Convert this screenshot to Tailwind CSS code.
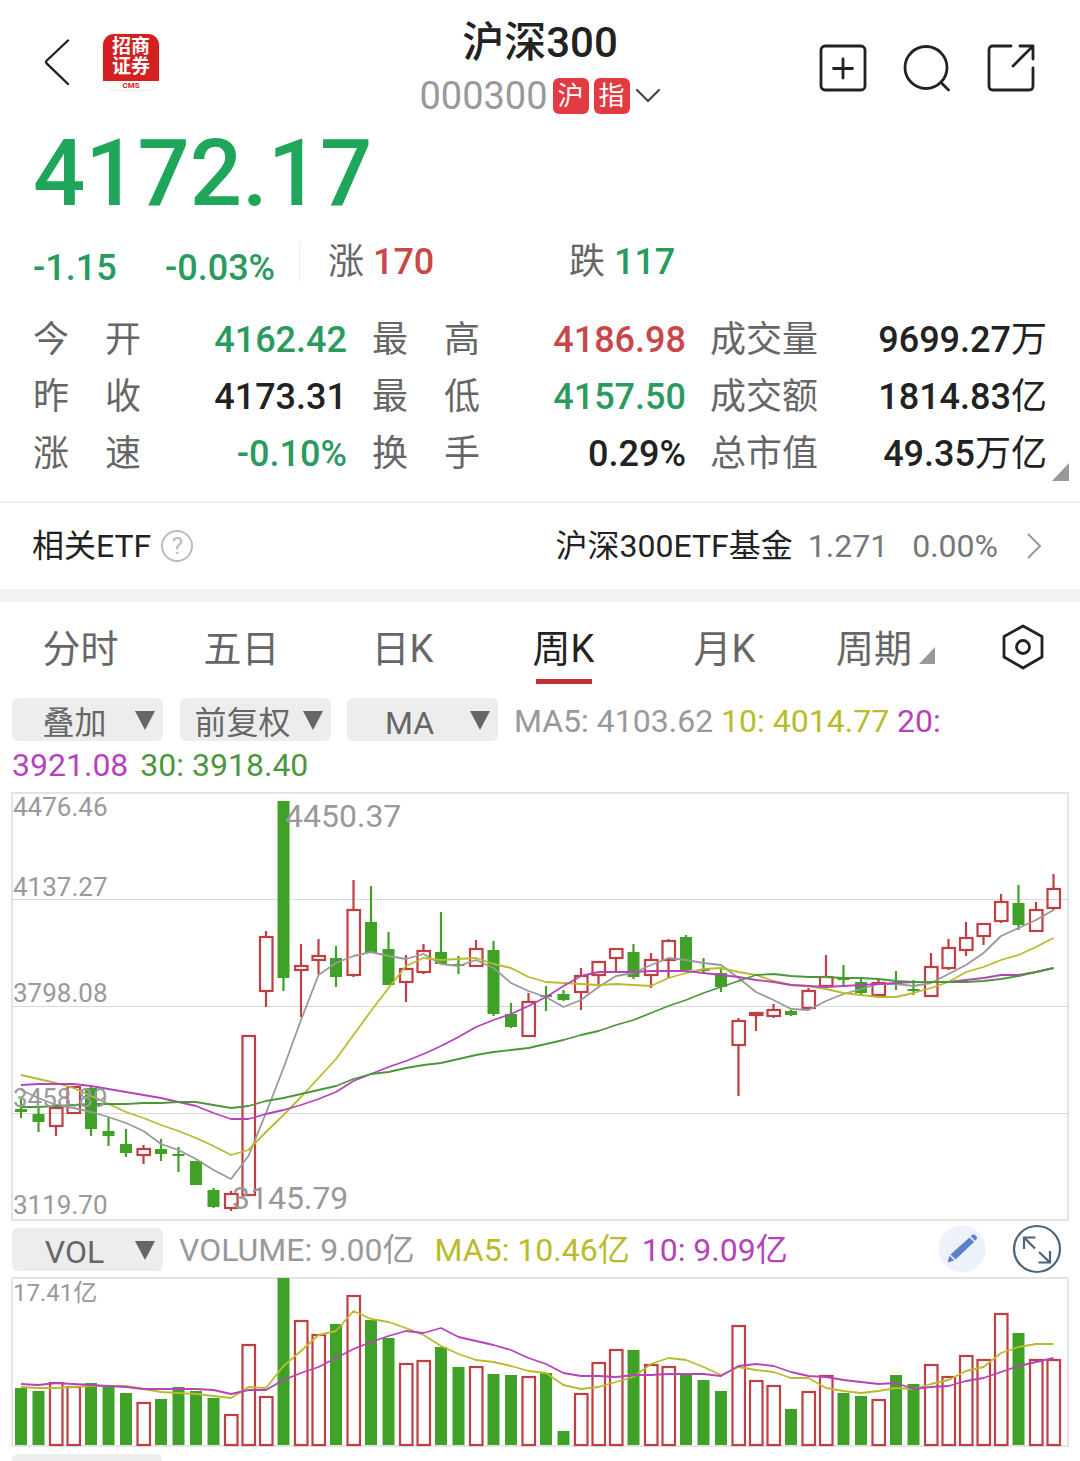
<!DOCTYPE html>
<html lang="zh-CN">
<head>
    <meta charset="UTF-8">
    <meta name="viewport" content="width=device-width, initial-scale=1.0">
    <title>沪深300</title>
    <script src="https://cdn.jsdelivr.net/npm/@tailwindcss/browser@4"></script>
</head>
<body class="bg-white text-[#222] font-['Roboto','Noto_Sans_CJK_SC',sans-serif]">
    <!-- Header -->
    <header class="grid grid-cols-[1fr_auto_1fr] items-start px-11 pt-4">
        <div class="flex items-center gap-8 pt-[17px]">
            <a href="#" aria-label="返回">
                <svg class="w-[26px] h-[46px]" viewBox="0 0 26 46" fill="none" stroke="#222" stroke-width="2.4" stroke-linecap="round" stroke-linejoin="round"><path d="M24 1.5 2.8 21.5Q1.2 23 2.8 24.6L24 45"/></svg>
            </a>
            <div class="w-[58px] h-[58px] rounded-xl overflow-hidden border border-[#eee] bg-white flex flex-col">
                <div class="h-[47px] bg-[#d4201f] text-white text-[19px] leading-[20px] font-bold text-center pt-[3px]">招商<br>证券</div>
                <div class="text-[#d4201f] text-[8px] leading-[9px] font-bold text-center">CMS</div>
            </div>
        </div>
        <div class="text-center">
            <h1 class="text-[42px] leading-[54px] font-medium">沪深300</h1>
            <button class="flex mx-auto items-center justify-center gap-[5px] h-[52px]">
                <span class="text-[38px] text-[#999]">000300</span>
                <span class="size-9 rounded-md bg-[#e23b41] text-white text-[26px] leading-9">沪</span>
                <span class="size-9 rounded-md bg-[#e23b41] text-white text-[26px] leading-9">指</span>
                <svg class="w-[26px] h-4" viewBox="0 0 26 16" fill="none" stroke="#444" stroke-width="2.2" stroke-linecap="round"><path d="M2 2l11 11L24 2"/></svg>
            </button>
        </div>
        <div class="flex items-center justify-end gap-[34px] pt-[27px]">
            <button aria-label="添加自选">
                <svg class="w-[50px] h-[50px]" viewBox="0 0 50 50" fill="none" stroke="#222" stroke-width="2.8" stroke-linecap="round"><rect x="3" y="3" width="44" height="44" rx="4"/><path d="M25 16v19M15.500 25.500h19"/></svg>
            </button>
            <button aria-label="搜索">
                <svg class="w-[50px] h-[50px]" viewBox="0 0 50 50" fill="none" stroke="#222" stroke-width="2.8" stroke-linecap="round"><circle cx="24" cy="24.500" r="21"/><path d="M39 39.500l7.500 7.500"/></svg>
            </button>
            <button aria-label="分享">
                <svg class="w-[50px] h-[50px]" viewBox="0 0 50 50" fill="none" stroke="#222" stroke-width="2.8" stroke-linecap="round" stroke-linejoin="round"><path d="M25 3H7Q3 3 3 7V43Q3 47 7 47H43Q47 47 47 43V25M34 3H47V16M46 4 27 23"/></svg>
            </button>
        </div>
    </header>

    <!-- Quote -->
    <section class="relative px-[33px] pb-[18px]">
        <div class="text-[92px] leading-[104px] font-medium text-[#1fa65a]">4172.17</div>
        <div class="flex items-center h-[68px] pt-1 text-[36px] leading-10">
            <div class="flex h-10 border-r border-[#eee] text-[#2a9a5f] font-medium">
                <span class="w-[132px] pt-1.5">-1.15</span>
                <span class="w-[134px] pt-1.5">-0.03%</span>
            </div>
            <div class="pl-7 w-[269px] text-[#666]">涨 <span class="font-medium text-[#c8474b]">170</span></div>
            <div class="text-[#666]">跌 <span class="font-medium text-[#2a9a5f]">117</span></div>
        </div>
        <table class="mt-[18px] w-full text-[36px] leading-[57px] [&_th]:font-normal [&_th]:text-[#666] [&_th]:text-left [&_th]:p-0 [&_td]:p-0 [&_td]:text-right [&_td]:font-medium">
            <tbody>
                <tr>
                    <th class="w-[108px]"><span class="flex justify-between"><span>今</span><span>开</span></span></th>
                    <td class="w-[206px] text-[#2a9a5f]">4162.42</td>
                    <th class="w-[133px]"><span class="flex justify-between pl-[25px]"><span>最</span><span>高</span></span></th>
                    <td class="w-[206px] text-[#c8474b]">4186.98</td>
                    <th class="w-[133px]"><span class="pl-6">成交量</span></th>
                    <td>9699.27<span class="font-normal">万</span></td>
                </tr>
                <tr>
                    <th><span class="flex justify-between"><span>昨</span><span>收</span></span></th>
                    <td>4173.31</td>
                    <th><span class="flex justify-between pl-[25px]"><span>最</span><span>低</span></span></th>
                    <td class="text-[#2a9a5f]">4157.50</td>
                    <th><span class="pl-6">成交额</span></th>
                    <td>1814.83<span class="font-normal">亿</span></td>
                </tr>
                <tr>
                    <th><span class="flex justify-between"><span>涨</span><span>速</span></span></th>
                    <td class="text-[#2a9a5f]">-0.10%</td>
                    <th><span class="flex justify-between pl-[25px]"><span>换</span><span>手</span></span></th>
                    <td>0.29%</td>
                    <th><span class="pl-6">总市值</span></th>
                    <td>49.35<span class="font-normal">万亿</span></td>
                </tr>
            </tbody>
        </table>
        <svg class="absolute right-[11px] bottom-5 w-[17px] h-[18px]" viewBox="0 0 17 18" fill="#999"><path d="M17 0V18H0z"/></svg>
    </section>

    <!-- Related ETF -->
    <section class="flex items-center justify-between h-[88px] px-8 border-t-2 border-[#f0f0f0] text-[32px]">
        <div class="flex items-center gap-[10px]">
            <span>相关ETF</span>
            <button aria-label="说明" class="size-8 rounded-full border-2 border-[#bbb] text-[#bbb] text-[24px] leading-7 text-center">?</button>
        </div>
        <a href="#" class="flex items-center pr-1.5">
            <span>沪深300ETF基金</span>
            <span class="ml-[15px] text-[#777]">1.271</span>
            <span class="ml-6 text-[#777]">0.00%</span>
            <svg class="ml-7 w-4 h-7" viewBox="0 0 16 28" fill="none" stroke="#999" stroke-width="2"><path d="M2 2l12 12L2 26"/></svg>
        </a>
    </section>
    <div class="h-[13px] bg-[#f2f2f2]"></div>

    <!-- Period tabs -->
    <nav class="grid grid-cols-[repeat(6,161fr)_114fr] pt-3 text-[38px] leading-[70px] text-[#666]">
        <button>分时</button>
        <button>五日</button>
        <button>日K</button>
        <button class="relative text-[#222]">周K<span class="absolute left-1/2 -translate-x-1/2 bottom-0 w-14 h-[5px] bg-[#c33136]"></span></button>
        <button>月K</button>
        <button class="flex items-center justify-center gap-[7px]">周期<svg class="w-4 h-[17px] mt-3" viewBox="0 0 16 17" fill="#999"><path d="M16 0V17H0z"/></svg></button>
        <button aria-label="设置" class="flex items-center justify-center pb-1">
            <svg class="w-[42px] h-[46px]" viewBox="0 0 42 46" fill="none" stroke="#222" stroke-width="2.8" stroke-linejoin="round"><path d="M21 2 40 12.500V33L21 44 2 33V12.500z"/><circle cx="21" cy="23" r="6.500"/></svg>
        </button>
    </nav>

    <main class="px-3">
        <!-- Main chart legend -->
        <div class="flex items-center pt-3.5 text-[32px] leading-[43px] whitespace-nowrap">
            <div class="relative mr-[17px]">
                <select aria-label="叠加" class="block appearance-none w-[151px] h-[43px] pt-1 pr-[26px] rounded-md bg-[#ededed] text-[#666] text-center"><option>叠加</option></select>
                <svg class="absolute right-2 top-3 w-5 h-5 pointer-events-none" viewBox="0 0 20 20" fill="#666"><path d="M0 1H20L10 20z"/></svg>
            </div>
            <div class="relative mr-4">
                <select aria-label="复权" class="block appearance-none w-[151px] h-[43px] pt-1 pr-[26px] rounded-md bg-[#ededed] text-[#666] text-center"><option>前复权</option></select>
                <svg class="absolute right-2 top-3 w-5 h-5 pointer-events-none" viewBox="0 0 20 20" fill="#666"><path d="M0 1H20L10 20z"/></svg>
            </div>
            <div class="relative mr-4">
                <select aria-label="主图指标" class="block appearance-none w-[151px] h-[43px] pt-1 pr-[26px] rounded-md bg-[#ededed] text-[#666] text-center"><option>MA</option></select>
                <svg class="absolute right-2 top-3 w-5 h-5 pointer-events-none" viewBox="0 0 20 20" fill="#666"><path d="M0 1H20L10 20z"/></svg>
            </div>
            <div class="h-[43px] pt-0.5">
                <span class="mr-2 text-[#999]">MA5: 4103.62</span><span class="mr-2 text-[#b9bb2c]">10: 4014.77</span><span class="text-[#b743bb]">20:</span>
            </div>
        </div>
        <p class="text-[32px] leading-[48px]"><span class="mr-3 text-[#b743bb]">3921.08</span><span class="text-[#4c973c]">30: 3918.40</span></p>

        <svg id="kline" class="block w-full h-auto mt-1 overflow-visible" viewBox="0 0 1056 427" fill="none" role="img" aria-label="周K线"></svg>

        <!-- Volume legend -->
        <div class="flex items-center h-[58px] text-[32px] whitespace-nowrap">
            <div class="relative mr-4">
                <select aria-label="副图指标" class="block appearance-none w-[151px] h-[43px] pr-[26px] rounded-md bg-[#ededed] text-[#666] text-center"><option>VOL</option></select>
                <svg class="absolute right-2 top-3 w-5 h-5 pointer-events-none" viewBox="0 0 20 20" fill="#666"><path d="M0 1H20L10 20z"/></svg>
            </div>
            <div class="pt-0.5">
                <span class="mr-5 text-[#999]">VOLUME: 9.00亿</span><span class="mr-3 text-[#b9bb2c]">MA5: 10.46亿</span><span class="text-[#b743bb]">10: 9.09亿</span>
            </div>
            <button aria-label="画线" class="ml-auto mr-[26px]">
                <svg class="size-[48px]" viewBox="0 0 48 48"><circle cx="24" cy="24" r="23.500" fill="#edf1fa"/><g fill="#5b7fcb"><path d="M31.500 12.500l4.500 4.500-18.500 17.500-5-5z"/><path d="M32.800 11.300l1.700-1.600q1.200-.9 2.400.2l1.800 1.900q1 1.200 0 2.300l-1.600 1.600z"/><path d="M11.500 30.800l4.700 4.700-5.700 1.700q-.8 0-.6-.9z"/></g></svg>
            </button>
            <button aria-label="全屏" class="mr-1.5">
                <svg class="size-[50px]" viewBox="0 0 50 50" fill="none" stroke="#4b6479" stroke-width="2.200"><circle cx="25" cy="25" r="23"/><path d="M12 25V13.500H23.500M12 13.500 23 24.500M38 27V38.500H26.500M38 38.500 27 28"/></svg>
            </button>
        </div>

        <svg id="volume" class="block w-full h-auto overflow-visible" viewBox="0 0 1056 168" fill="none" role="img" aria-label="成交量"></svg>

        <div class="mt-2 w-[150px] h-[7px] rounded-t-md bg-[#ededed]"></div>
    </main>

    <script>
        const RED = '#bf3f42', GREEN = '#3fa127';
        const GREY_LINE = '#999', YELLOW_LINE = '#b9bb2c', PURPLE_LINE = '#b743bb', GREEN_LINE = '#4c973c';

        // [direction, high, body top, body bottom, low], one per week
        const candles = [
            ['d', 306, 316, 319, 325], ['d', 313, 321, 329, 339], ['u', 314, 315, 333, 343], ['u', 294, 294, 320, 320], ['d', 293, 295, 336, 343],
            ['d', 324, 338, 343, 353], ['d', 336, 351, 360, 364], ['u', 352, 356, 362, 371], ['d', 346, 356, 361, 368], ['d', 354, 361, 363, 379],
            ['d', 368, 368, 392, 392], ['d', 395, 397, 414, 415], ['u', 398, 401, 415, 418], ['u', 243, 243, 402, 402], ['u', 138, 144, 198, 214],
            ['d', 8, 8, 185, 198], ['u', 151, 173, 177, 224], ['u', 146, 163, 167, 181], ['d', 153, 165, 184, 194], ['u', 87, 117, 182, 184],
            ['d', 93, 129, 160, 160], ['d', 139, 156, 192, 192], ['u', 162, 176, 189, 209], ['u', 151, 158, 179, 181], ['d', 119, 159, 171, 171],
            ['d', 163, 171, 172, 181], ['u', 147, 156, 173, 173], ['d', 148, 157, 221, 223], ['d', 210, 221, 234, 235], ['u', 200, 209, 243, 243],
            ['d', 193, 202, 203, 218], ['d', 197, 201, 207, 208], ['u', 175, 183, 199, 217], ['u', 169, 169, 182, 191], ['u', 156, 156, 165, 179],
            ['d', 151, 159, 184, 186], ['u', 160, 167, 182, 195], ['u', 146, 148, 167, 185], ['d', 142, 144, 177, 177], ['d', 165, 176, 177, 180],
            ['d', 174, 180, 194, 199], ['u', 225, 228, 252, 303], ['u', 219, 220, 222, 238], ['u', 211, 217, 223, 225], ['d', 217, 218, 222, 223],
            ['u', 195, 198, 215, 217], ['u', 162, 184, 193, 194], ['d', 172, 185, 186, 192], ['d', 186, 189, 200, 202], ['u', 185, 190, 202, 202],
            ['d', 178, 190, 191, 197], ['d', 187, 196, 198, 202], ['u', 160, 174, 203, 203], ['u', 146, 155, 175, 177], ['u', 129, 145, 157, 163],
            ['u', 130, 131, 143, 152], ['u', 101, 109, 128, 130], ['d', 92, 110, 132, 137], ['u', 109, 117, 138, 138], ['u', 81, 96, 115, 117]
        ];
        const ma5 = [297,305,312,315,319,324,330,338,351,357,366,377,386,363,320,275,227,182,170,163,159,163,166,161,171,173,167,175,190,198,204,214,207,194,183,180,172,165,167,170,172,185,199,207,216,217,208,201,196,191,191,193,190,181,172,160,143,135,127,117];
        const ma10 = [282,286,290,295,303,311,319,325,332,338,345,353,362,357,339,322,304,285,266,242,218,195,173,165,167,166,165,171,175,184,189,190,191,192,191,192,193,185,180,176,175,179,182,188,192,193,196,200,202,204,204,200,195,189,179,174,167,162,154,145];
        const ma20 = [292,291,291,291,293,296,299,302,305,309,313,320,326,326,321,317,312,306,299,288,281,274,268,261,253,244,234,227,221,213,204,193,183,179,179,179,178,178,178,180,182,184,187,189,192,193,194,193,192,191,190,189,189,189,187,185,182,182,179,175];
        const ma30 = [314,314,313,312,311,311,311,310,310,309,309,312,315,313,308,305,301,297,293,286,281,279,275,272,270,266,262,259,257,255,251,247,242,238,232,227,220,213,207,200,194,188,182,181,183,184,184,185,185,186,188,189,189,189,189,188,186,183,179,175];

        const volumes = [110,113,104,108,105,107,115,124,121,109,113,120,136,66,118,0,42,56,46,17,42,60,85,82,69,89,88,96,97,98,95,153,115,84,71,72,86,88,96,102,113,47,102,107,131,113,97,115,118,121,97,106,86,98,77,81,35,55,81,81];
        const vol5 = [109,110,110,109,108,108,108,111,114,115,116,118,120,109,110,88,73,57,53,33,41,44,50,57,68,76,82,84,88,93,95,107,111,109,104,99,86,80,82,89,97,89,92,94,100,100,110,113,115,113,110,111,106,102,93,89,75,69,66,66];
        const vol10 = [106,107,105,106,107,108,109,111,111,111,111,112,116,112,112,102,95,89,80,71,64,58,53,55,50,59,63,67,72,80,86,95,98,98,99,97,97,96,96,96,98,88,86,88,94,98,99,102,104,106,105,111,109,108,103,100,94,88,84,80];

        const x = i => 9 + i * 17.5;
        const line = (ys, color) => `<polyline points="${ys.map((y, i) => x(i) + ',' + y).join(' ')}" stroke="${color}" stroke-width="1.8" stroke-linejoin="round"/>`;
        const label = (px, y, size, text) => `<text x="${px}" y="${y}" font-size="${size}" fill="#999">${text}</text>`;
        const frame = h => `<rect x="0" y="0" width="1056" height="${h}" stroke="#e4e4e4" stroke-width="2"/>`;

        function bar(i, up, top, bottom) {
            if (up) {
                return `<rect x="${x(i) - 6}" y="${top}" width="12.5" height="${Math.max(bottom - top, 2)}" stroke="${RED}" stroke-width="2.2"/>`;
            }
            return `<rect x="${x(i) - 6}" y="${top}" width="12" height="${Math.max(bottom - top, 2)}" fill="${GREEN}"/>`;
        }

        // K line
        let k = frame(427);
        [106.5, 213.5, 320.5].forEach(y => k += `<path d="M0 ${y}H1056" stroke="#d9d9d9"/>`);
        candles.forEach(([dir, high, top, bottom, low], i) => {
            const up = dir === 'u';
            k += `<path d="M${x(i)} ${high}V${top}M${x(i)} ${bottom}V${low}" stroke="${up ? RED : GREEN}" stroke-width="2.2"/>`;
            k += bar(i, up, top, bottom);
        });
        k += line(ma5, GREY_LINE) + line(ma10, YELLOW_LINE) + line(ma20, PURPLE_LINE) + line(ma30, GREEN_LINE);
        k += label(1, 23, 26, '4476.46') + label(1, 103, 26, '4137.27') + label(1, 209, 26, '3798.08') + label(1, 314, 26, '3458.89') + label(1, 421, 26, '3119.70');
        k += label(273, 34, 32, '4450.37') + label(220, 416, 32, '3145.79');
        document.getElementById('kline').innerHTML = k;

        // Volume
        let v = frame(168);
        volumes.forEach((top, i) => {
            const up = candles[i][0] === 'u';
            v += bar(i, up, up ? top + 1 : top, 167);
        });
        v += line(vol5, YELLOW_LINE) + line(vol10, PURPLE_LINE) + label(1, 23, 24, '17.41亿');
        document.getElementById('volume').innerHTML = v;
    </script>
</body>
</html>
